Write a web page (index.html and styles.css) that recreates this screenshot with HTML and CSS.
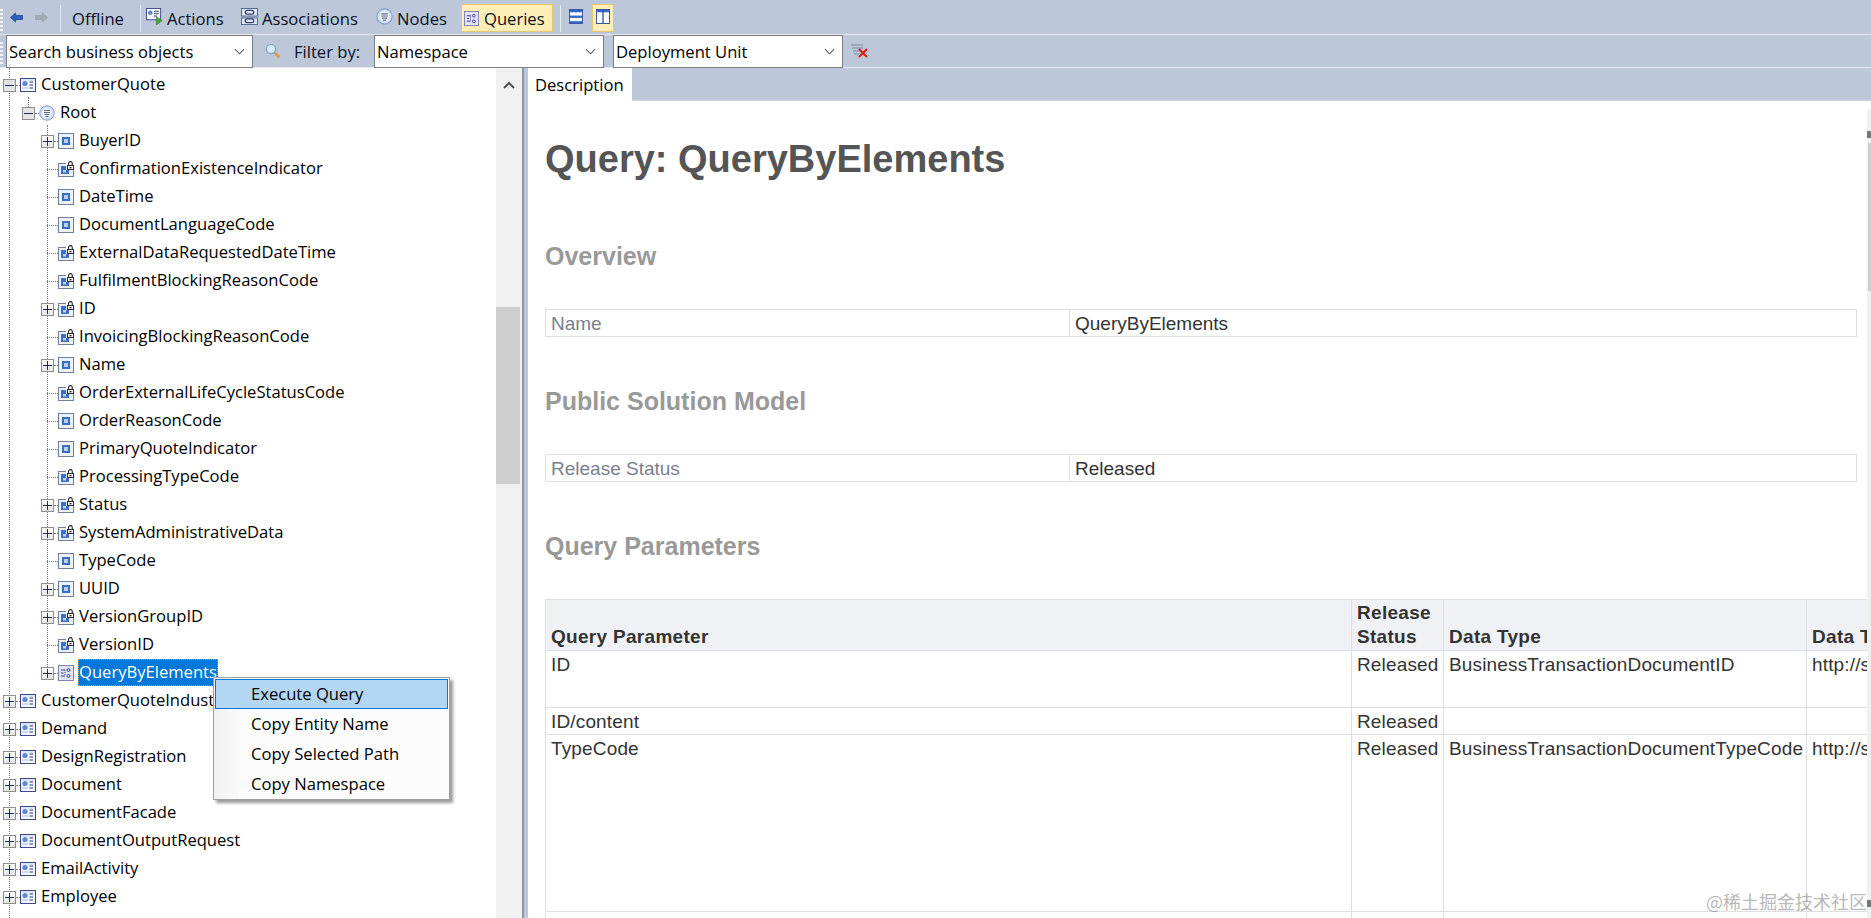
FILE: index.html
```html
<!DOCTYPE html>
<html lang="en">
<head>
<meta charset="utf-8">
<title>Query: QueryByElements</title>
<link rel="stylesheet" href="styles.css">
</head>
<body>
<svg class="defs" width="0" height="0" aria-hidden="true">
  <defs>
    <symbol id="bo" viewBox="0 0 16 16">
      <rect x="0.5" y="1.5" width="15" height="13" fill="#f3f5fc" stroke="#3f4784"/>
      <rect x="1.5" y="2.5" width="13" height="1" fill="#c9d3ee"/>
      <circle cx="5" cy="6.5" r="2.6" fill="#5b8ad0"/>
      <rect x="2" y="10" width="6" height="2" fill="#cfdaf0"/>
      <path d="M9.5 5h3.5M9.5 8h3.5M9.5 11h3.5" stroke="#2a3590" stroke-width="1.2"/>
    </symbol>
    <symbol id="node" viewBox="0 0 16 16">
      <circle cx="8" cy="8" r="7.2" fill="#d3e0f6" stroke="#7f9dd4"/>
      <circle cx="8" cy="8" r="4.8" fill="#f3f6fc"/>
      <path d="M5 5.5h6M5 7.5h6M5.5 9.5h5M6.5 11.5h3" stroke="#55698f" stroke-width="1"/>
    </symbol>
    <symbol id="elem" viewBox="0 0 16 16">
      <rect x="0.5" y="0.5" width="15" height="15" fill="#edf2f8" stroke="#6f8098"/>
      <rect x="4" y="4" width="8" height="8" fill="#3a6fc4"/>
      <rect x="6" y="6" width="4" height="4" fill="#b8d0f2"/>
    </symbol>
    <symbol id="lock" viewBox="0 0 16 16">
      <rect x="0.5" y="2.5" width="15" height="13" fill="#edf2f8" stroke="#6f8098"/>
      <rect x="3" y="5" width="8" height="8" fill="#3a6fc4"/>
      <rect x="5" y="9" width="3" height="2.5" fill="#b8d0f2"/>
      <rect x="8" y="0" width="8" height="9" fill="#fff"/>
      <path d="M10.5 4.5v-2a1.9 1.9 0 0 1 3.8 0v2" fill="none" stroke="#222" stroke-width="1.1"/>
      <rect x="9.5" y="4.5" width="6" height="4" fill="#fff" stroke="#2d2d3d"/>
      <rect x="11.5" y="6" width="2" height="1.4" fill="#2d2d3d"/>
    </symbol>
    <symbol id="query" viewBox="0 0 16 16">
      <rect x="0.5" y="0.5" width="15" height="15" fill="#e4e4f7" stroke="#7f80ad"/>
      <path d="M3 5h4M3 8h2.5M3 11h4" stroke="#3c3d9a" stroke-width="1.1"/>
      <path d="M7 5v6" stroke="#3c3d9a" stroke-width="1" stroke-dasharray="1 1"/>
      <circle cx="10.5" cy="5" r="1.5" fill="none" stroke="#3c3d9a"/>
      <circle cx="10.5" cy="11" r="1.5" fill="none" stroke="#3c3d9a"/>
    </symbol>
    <symbol id="actions" viewBox="0 0 18 18">
      <rect x="0.5" y="0.5" width="15" height="12" fill="#f3f5fc" stroke="#3f4784"/>
      <circle cx="4.5" cy="5" r="2.4" fill="#5b8ad0"/>
      <path d="M8.5 3.5h5M8.5 6h5M8.5 8.5h3" stroke="#2a3590"/>
      <path d="M11 9l6 4.5-6 4.5z" fill="#49a83c" stroke="#2d7a24" stroke-width="0.6"/>
    </symbol>
    <symbol id="assoc" viewBox="0 0 18 18">
      <rect x="0.5" y="0.5" width="17" height="8" fill="#dfe7f5" stroke="#50648c"/>
      <rect x="0.5" y="10.5" width="17" height="7" fill="#dfe7f5" stroke="#50648c"/>
      <rect x="4.5" y="2.5" width="9" height="4" rx="2" fill="none" stroke="#2f3f70" stroke-width="1.3"/>
      <rect x="4.5" y="11.5" width="9" height="4" rx="2" fill="none" stroke="#2f3f70" stroke-width="1.3"/>
    </symbol>
    <symbol id="split-h" viewBox="0 0 15 16">
      <rect x="0.5" y="0.5" width="14" height="15" fill="#fff" stroke="#2a4f9a"/>
      <rect x="1" y="1" width="13" height="2.5" fill="#3468c8"/>
      <rect x="1" y="7" width="13" height="2.5" fill="#3468c8"/>
      <rect x="1" y="13" width="13" height="2" fill="#3468c8"/>
    </symbol>
    <symbol id="split-v" viewBox="0 0 15 16">
      <rect x="0.5" y="0.5" width="14" height="15" fill="#fff" stroke="#2a4f9a"/>
      <rect x="1" y="1" width="13" height="2.5" fill="#3468c8"/>
      <path d="M7.5 1v14" stroke="#2a4f9a" stroke-width="1.4"/>
    </symbol>
  </defs>
</svg>

<header class="bar bar-top">
  <span class="grip"></span>
  <svg class="ti arrow" viewBox="0 0 14 12"><path d="M0.5 6L6 1v2.8h7.5v4.4H6V11z" fill="#2c5fc0" stroke="#1d3f8a" stroke-width="0.8"/></svg>
  <svg class="ti arrow fwd" viewBox="0 0 14 12"><path d="M13.5 6L8 1v2.8H0.5v4.4H8V11z" fill="#a4abb6" stroke="#98a0ac" stroke-width="0.8"/></svg>
  <span class="sep sep-a"></span>
  <span class="btn btn-offline">Offline</span>
  <span class="sep"></span>
  <span class="btn btn-actions"><svg class="ti tool"><use href="#actions"/></svg>Actions</span>
  <span class="btn btn-assoc"><svg class="ti tool"><use href="#assoc"/></svg>Associations</span>
  <span class="btn btn-nodes"><svg class="ti tool"><use href="#node"/></svg>Nodes</span>
  <span class="btn btn-queries on"><svg class="ti tool tool-q"><use href="#query"/></svg>Queries</span>
  <span class="sep sep-c"></span>
  <svg class="ti lay"><use href="#split-h"/></svg>
  <span class="layon on"><svg class="ti lay"><use href="#split-v"/></svg></span>
</header>

<div class="bar bar-filter">
  <span class="grip"></span>
  <div class="combo combo-a"><span>Search business objects</span><svg class="chev" viewBox="0 0 12 7"><path d="M1 1l5 5 5-5" fill="none" stroke="#555" stroke-width="1.1"/></svg></div>
  <svg class="ti search" viewBox="0 0 16 16"><circle cx="6" cy="6" r="4.6" fill="#d7ecfb" stroke="#7fa6c8" stroke-width="1.4"/><path d="M9.5 9.5l5 5" stroke="#d99a4a" stroke-width="2.6"/></svg>
  <span class="flabel">Filter by:</span>
  <div class="combo combo-b"><span>Namespace</span><svg class="chev" viewBox="0 0 12 7"><path d="M1 1l5 5 5-5" fill="none" stroke="#555" stroke-width="1.1"/></svg></div>
  <div class="combo combo-c"><span>Deployment Unit</span><svg class="chev" viewBox="0 0 12 7"><path d="M1 1l5 5 5-5" fill="none" stroke="#555" stroke-width="1.1"/></svg></div>
  <svg class="ti clear" viewBox="0 0 17 14"><path d="M0 1h12M1 4h11M2 7h8M3 10h5" stroke="#7c8698" stroke-width="1"/><path d="M8 5l8 8M16 5l-8 8" stroke="#e01818" stroke-width="2"/></svg>
</div>

<main class="main">
  <section class="left">
    <div class="tree">
      <i class="guide g0"></i><i class="guide g1"></i><i class="guide g2"></i>
      <div class="row l0"><i class="exp minus"></i><i class="conn"></i><svg class="ic"><use href="#bo"/></svg><span class="t">CustomerQuote</span></div>
      <div class="row l1"><i class="exp minus"></i><i class="conn"></i><svg class="ic"><use href="#node"/></svg><span class="t">Root</span></div>
      <div class="row l2"><i class="exp plus"></i><i class="conn"></i><svg class="ic"><use href="#elem"/></svg><span class="t">BuyerID</span></div>
      <div class="row l2 leaf"><i class="conn"></i><svg class="ic"><use href="#lock"/></svg><span class="t">ConfirmationExistenceIndicator</span></div>
      <div class="row l2 leaf"><i class="conn"></i><svg class="ic"><use href="#elem"/></svg><span class="t">DateTime</span></div>
      <div class="row l2 leaf"><i class="conn"></i><svg class="ic"><use href="#elem"/></svg><span class="t">DocumentLanguageCode</span></div>
      <div class="row l2 leaf"><i class="conn"></i><svg class="ic"><use href="#lock"/></svg><span class="t">ExternalDataRequestedDateTime</span></div>
      <div class="row l2 leaf"><i class="conn"></i><svg class="ic"><use href="#lock"/></svg><span class="t">FulfilmentBlockingReasonCode</span></div>
      <div class="row l2"><i class="exp plus"></i><i class="conn"></i><svg class="ic"><use href="#lock"/></svg><span class="t">ID</span></div>
      <div class="row l2 leaf"><i class="conn"></i><svg class="ic"><use href="#lock"/></svg><span class="t">InvoicingBlockingReasonCode</span></div>
      <div class="row l2"><i class="exp plus"></i><i class="conn"></i><svg class="ic"><use href="#elem"/></svg><span class="t">Name</span></div>
      <div class="row l2 leaf"><i class="conn"></i><svg class="ic"><use href="#lock"/></svg><span class="t">OrderExternalLifeCycleStatusCode</span></div>
      <div class="row l2 leaf"><i class="conn"></i><svg class="ic"><use href="#elem"/></svg><span class="t">OrderReasonCode</span></div>
      <div class="row l2 leaf"><i class="conn"></i><svg class="ic"><use href="#elem"/></svg><span class="t">PrimaryQuoteIndicator</span></div>
      <div class="row l2 leaf"><i class="conn"></i><svg class="ic"><use href="#lock"/></svg><span class="t">ProcessingTypeCode</span></div>
      <div class="row l2"><i class="exp plus"></i><i class="conn"></i><svg class="ic"><use href="#lock"/></svg><span class="t">Status</span></div>
      <div class="row l2"><i class="exp plus"></i><i class="conn"></i><svg class="ic"><use href="#lock"/></svg><span class="t">SystemAdministrativeData</span></div>
      <div class="row l2 leaf"><i class="conn"></i><svg class="ic"><use href="#elem"/></svg><span class="t">TypeCode</span></div>
      <div class="row l2"><i class="exp plus"></i><i class="conn"></i><svg class="ic"><use href="#elem"/></svg><span class="t">UUID</span></div>
      <div class="row l2"><i class="exp plus"></i><i class="conn"></i><svg class="ic"><use href="#lock"/></svg><span class="t">VersionGroupID</span></div>
      <div class="row l2 leaf"><i class="conn"></i><svg class="ic"><use href="#lock"/></svg><span class="t">VersionID</span></div>
      <div class="row l2"><i class="exp plus"></i><i class="conn"></i><svg class="ic"><use href="#query"/></svg><span class="t sel">QueryByElements</span></div>
      <div class="row l0"><i class="exp plus"></i><i class="conn"></i><svg class="ic"><use href="#bo"/></svg><span class="t">CustomerQuoteIndustry</span></div>
      <div class="row l0"><i class="exp plus"></i><i class="conn"></i><svg class="ic"><use href="#bo"/></svg><span class="t">Demand</span></div>
      <div class="row l0"><i class="exp plus"></i><i class="conn"></i><svg class="ic"><use href="#bo"/></svg><span class="t">DesignRegistration</span></div>
      <div class="row l0"><i class="exp plus"></i><i class="conn"></i><svg class="ic"><use href="#bo"/></svg><span class="t">Document</span></div>
      <div class="row l0"><i class="exp plus"></i><i class="conn"></i><svg class="ic"><use href="#bo"/></svg><span class="t">DocumentFacade</span></div>
      <div class="row l0"><i class="exp plus"></i><i class="conn"></i><svg class="ic"><use href="#bo"/></svg><span class="t">DocumentOutputRequest</span></div>
      <div class="row l0"><i class="exp plus"></i><i class="conn"></i><svg class="ic"><use href="#bo"/></svg><span class="t">EmailActivity</span></div>
      <div class="row l0"><i class="exp plus"></i><i class="conn"></i><svg class="ic"><use href="#bo"/></svg><span class="t">Employee</span></div>
      <div class="row l0"><i class="exp plus"></i><i class="conn"></i><svg class="ic"><use href="#bo"/></svg><span class="t">EmployeeTime</span></div>
    </div>
    <div class="vscroll">
      <svg class="up" viewBox="0 0 12 8"><path d="M1 7l5-5 5 5" fill="none" stroke="#505050" stroke-width="2"/></svg>
      <div class="thumb"></div>
    </div>
  </section>

  <div class="splitter"></div>

  <section class="right">
    <div class="tabs"><span class="tab">Description</span></div>
    <div class="pane">
      <article class="doc">
        <h1>Query: QueryByElements</h1>
        <h2 class="h-over">Overview</h2>
        <table class="kv">
          <tr><td class="k">Name</td><td>QueryByElements</td></tr>
        </table>
        <h2 class="h-next">Public Solution Model</h2>
        <table class="kv">
          <tr><td class="k">Release Status</td><td>Released</td></tr>
        </table>
        <h2 class="h-next">Query Parameters</h2>
        <table class="params">
          <colgroup><col class="c1"><col class="c2"><col class="c3"><col class="c4"></colgroup>
          <tr class="rh"><th>Query Parameter</th><th>Release Status</th><th>Data Type</th><th>Data Type Namespace</th></tr>
          <tr class="r57"><td>ID</td><td>Released</td><td>BusinessTransactionDocumentID</td><td>http://sap.com/xi/AP/Common/GDT</td></tr>
          <tr class="r27"><td>ID/content</td><td>Released</td><td></td><td></td></tr>
          <tr class="r177"><td>TypeCode</td><td>Released</td><td>BusinessTransactionDocumentTypeCode</td><td>http://sap.com/xi/AP/Common/GDT</td></tr>
          <tr class="r27"><td></td><td></td><td></td><td></td></tr>
        </table>
      </article>
      <div class="pscroll"><b class="ptick"></b><b class="pthumb"></b><b class="ptick ptick-low"></b></div>
    </div>
  </section>
</main>

<nav class="menu">
  <div class="mi hot">Execute Query</div>
  <div class="mi">Copy Entity Name</div>
  <div class="mi">Copy Selected Path</div>
  <div class="mi">Copy Namespace</div>
</nav>
<div class="mark">@稀土掘金技术社区</div>
</body>
</html>
```

FILE: styles.css
```css
* { box-sizing: border-box; }
html, body { margin: 0; height: 100%; }
body {
  width: 1871px;
  height: 918px;
  overflow: hidden;
  display: flex;
  flex-direction: column;
  position: relative;
  background: #fff;
  color: #000;
  font-family: "Open Sans", "Noto Sans", sans-serif;
  font-size: 16.6px;
}
.defs { position: absolute; }
svg { display: block; flex: none; }

/* toolbars */
.bar {
  display: flex;
  align-items: center;
  background: #bcc7d9;
  border-bottom: 1px solid #e6eaf0;
  flex: none;
}
.bar-top { height: 35px; padding-top: 2px; }
.bar-filter { height: 33px; align-items: stretch; }
.grip {
  width: 3px;
  align-self: stretch;
  margin: 7px 0 3px;
  background: repeating-linear-gradient(to bottom, #f4f6fa 0 2px, transparent 2px 4px);
  flex: none;
}
.arrow { width: 13px; height: 11px; margin-left: 7px; margin-top: -2px; }
.arrow.fwd { margin-left: 12px; }
.sep { width: 1px; height: 27px; background: #e4e8ef; flex: none; }
.sep-a { margin-left: 12px; }
.sep-c { margin-left: 7px; }
.btn { display: flex; align-items: center; height: 28px; padding-top: 1px; white-space: nowrap; color: #0a1020; flex: none; }
.btn-offline { margin-left: 11px; width: 68px; }
.btn-actions { margin-left: 5px; width: 95px; }
.btn-assoc { width: 135px; }
.btn-nodes { width: 85px; padding-left: 0; }
.btn-queries { width: 92px; padding-left: 3px; }
.tool { width: 17px; height: 17px; margin-right: 4px; margin-top: -5px; }
.tool-q { margin-top: -1px; width: 15px; height: 15px; margin-right: 5px; }
.on { background: #ffedb8; outline: 1px solid #e8c66e; outline-offset: -1px; }
.lay { width: 14px; height: 15px; margin-top: -4px; }
.sep-c + .lay { margin-left: 8px; }
.layon { display: flex; align-items: center; justify-content: center; width: 22px; height: 28px; margin-left: 9px; }

.combo {
  display: flex;
  align-items: center;
  justify-content: space-between;
  background: #fff;
  border: 1px solid #7d7d7d;
  padding: 0 7px 0 2px;
  height: 33px;
  flex: none;
}
.combo-a { width: 247px; margin-left: 3px; }
.combo-b { width: 230px; }
.combo-c { width: 230px; margin-left: 9px; }
.chev { width: 11px; height: 7px; }
.search { width: 16px; height: 16px; margin: 8px 0 0 12px; }
.flabel { margin-left: 13px; width: 80px; line-height: 33px; color: #0a1020; flex: none; }
.clear { width: 17px; height: 14px; margin: 9px 0 0 8px; }

/* layout */
.main { flex: 1; display: flex; min-height: 0; }
.left { width: 522px; display: flex; flex: none; }
.splitter {
  width: 6px;
  flex: none;
  background: #bcc7d9;
  border-left: 2px solid #8d97a8;
}

/* tree */
.tree {
  flex: 1;
  position: relative;
  overflow: hidden;
  padding-top: 3px;
}
.guide { position: absolute; width: 0; border-left: 1px dotted #777; }
.g0 { left: 9px; top: 0; bottom: 0; }
.g1 { left: 28px; top: 29px; height: 10px; }
.g2 { left: 47px; top: 57px; height: 548px; }
.row { display: flex; align-items: center; height: 28px; position: relative; white-space: nowrap; }
.l0 { padding-left: 3px; }
.l1 { padding-left: 22px; }
.l2 { padding-left: 41px; }
.exp {
  width: 13px;
  height: 13px;
  flex: none;
  border: 1px solid #8f8f8f;
  background: linear-gradient(#fff, #e4e4e4) ;
  position: relative;
}
.exp::before { content: ""; position: absolute; left: 1px; right: 1px; top: 5px; height: 1px; background: #1d2a68; }
.plus::after { content: ""; position: absolute; top: 1px; bottom: 1px; left: 5px; width: 1px; background: #1d2a68; }
.minus { background: #e4e4e4; }
.conn { width: 4px; flex: none; border-top: 1px dotted #777; }
.leaf { padding-left: 47px; }
.leaf .conn { width: 11px; }
.ic { width: 16px; height: 16px; margin-right: 4px; }
.t { padding: 0 1px; height: 27px; line-height: 26px; margin-top: -1px; }
.sel { background: #0078d7; color: #fff; outline: 1px dotted #d89a3a; outline-offset: -1px; }

.vscroll { width: 26px; flex: none; background: #f0f0f0; position: relative; padding-top: 13px; }
.up { width: 12px; height: 8px; margin: 0 auto; }
.thumb { width: 24px; height: 177px; margin-top: 218px; background: #cdcdcd; }

/* right */
.right { flex: 1; min-width: 0; display: flex; flex-direction: column; }
.tabs {
  height: 33px;
  flex: none;
  background: #bcc7d9;
  border-bottom: 1px solid #d0d4da;
  display: flex;
}
.tab {
  width: 104px;
  background: #fff;
  padding-left: 7px;
  line-height: 33px;
  height: 33px;
}
.pane { flex: 1; min-height: 0; display: flex; overflow: hidden; position: relative; }
.doc {
  flex: 1;
  min-width: 0;
  overflow: hidden;
  padding-left: 17px;
  font-family: "Liberation Sans", Arial, sans-serif;
  font-size: 19px;
  line-height: 24px;
  color: #333;
}
h1 { margin: 37px 0 0; font-size: 38px; line-height: 42px; color: #555; font-weight: bold; }
h2 { margin: 0; font-size: 25px; line-height: 30px; color: #999; font-weight: bold; }
.h-over { margin-top: 61px; }
.h-next { margin-top: 49px; }
table { border-collapse: collapse; table-layout: fixed; }
td, th { border: 1px solid #dddfe5; padding: 2px 5px 0; vertical-align: top; text-align: left; }
.kv { width: 1312px; margin-top: 38px; }
.kv .k { width: 524px; color: #7a808c; }
.kv td { height: 27px; }
.params { width: 1722px; margin-top: 38px; letter-spacing: 0.15px; }
.c1 { width: 806px; }
.c2 { width: 92px; }
.c3 { width: 363px; }
.c4 { width: 461px; }
.params th { background: #f0f1f5; vertical-align: bottom; color: #333; font-weight: bold; letter-spacing: 0.3px; padding-top: 1px; padding-bottom: 1px; }
.rh { height: 51px; }
.r57 { height: 57px; }
.r27 { height: 27px; }
.r177 { height: 177px; }
.pscroll { width: 4px; flex: none; background: #f0f0f0; position: relative; margin-top: 8px; display: flex; flex-direction: column; }
.ptick { height: 7px; margin-top: 22px; background: #777; }
.pthumb { height: 148px; margin-top: 5px; margin-left: 1px; background: #cdcdcd; }
.ptick-low { margin-top: 609px; }

/* context menu */
.menu {
  position: absolute;
  left: 213px;
  top: 677px;
  width: 237px;
  height: 123px;
  background: linear-gradient(to right, #f1f1f1, #f9f9f9 24px, #fcfcfc 25px);
  border: 1px solid #a0a0a0;
  padding: 1px;
  box-shadow: 3px 3px 3px rgba(0, 0, 0, 0.4);
  z-index: 5;
}
.mi { height: 30px; line-height: 29px; padding-left: 36px; }
.hot { background: #b3d7f3; outline: 1px solid #0078d7; outline-offset: -1px; }

.mark {
  position: absolute;
  right: 4px;
  bottom: 5px;
  font-family: "Noto Sans CJK SC", sans-serif;
  font-size: 18px;
  line-height: 24px;
  color: rgba(120, 120, 120, 0.55);
  z-index: 4;
}
```
